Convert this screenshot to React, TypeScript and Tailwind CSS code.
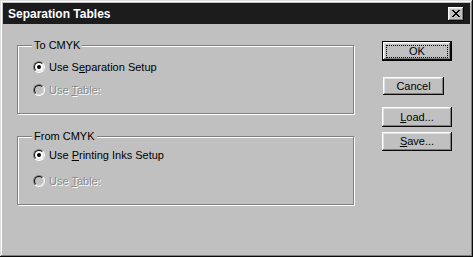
import React from "react";

const font = { fontFamily: '"Liberation Sans", Arial, sans-serif' };

function Radio({ checked, disabled }: { checked?: boolean; disabled?: boolean }) {
  return (
    <span className="relative block w-[12px] h-[12px] shrink-0 rounded-full border border-t-[#808080] border-l-[#808080] border-b-white border-r-white">
      <span
        className={
          "flex items-center justify-center w-full h-full rounded-full border border-t-[#0a0a0a] border-l-[#0a0a0a] border-b-[#dfdfdf] border-r-[#dfdfdf] " +
          (disabled ? "bg-[#c0c0c0]" : "bg-white")
        }
      >
        {checked && <span className="block w-[4px] h-[4px] rounded-full bg-black" />}
      </span>
    </span>
  );
}

function RadioRow({
  checked,
  disabled,
  children,
}: {
  checked?: boolean;
  disabled?: boolean;
  children: React.ReactNode;
}) {
  return (
    <div className="flex items-center h-[14px] gap-[4px]">
      <Radio checked={checked} disabled={disabled} />
      <span
        className={
          "text-[11px] leading-[13px] " +
          (disabled ? "text-[#8a8a8a] [text-shadow:1px_1px_0_#ffffff]" : "text-black")
        }
      >
        {children}
      </span>
    </div>
  );
}

function Group({
  label,
  className,
  children,
}: {
  label: string;
  className?: string;
  children: React.ReactNode;
}) {
  return (
    <div
      className={
        "relative w-[337px] h-[69px] border border-[#808080] shadow-[inset_1px_1px_0_#ffffff,1px_1px_0_#ffffff] pl-[15px] flex flex-col " +
        (className ?? "")
      }
    >
      <span className="absolute top-[-8px] left-[14px] px-[2px] bg-[#c0c0c0] text-[11px] leading-[14px] text-black">
        {label}
      </span>
      {children}
    </div>
  );
}

function Btn({
  children,
  w,
  h,
  className,
}: {
  children: React.ReactNode;
  w: string;
  h: string;
  className?: string;
}) {
  return (
    <div
      className={
        "flex items-center justify-center bg-[#c0c0c0] text-[11px] leading-[13px] text-black shadow-[inset_-1px_-1px_0_#0a0a0a,inset_1px_1px_0_#ffffff,inset_-2px_-2px_0_#808080,inset_2px_2px_0_#dfdfdf] " +
        w +
        " " +
        h +
        " " +
        (className ?? "")
      }
    >
      {children}
    </div>
  );
}

export default function App() {
  return (
    <div
      style={font}
      className="w-[473px] h-[257px] bg-[#c0c0c0] p-[3px] flex flex-col shadow-[inset_-1px_-1px_0_#0a0a0a,inset_1px_1px_0_#dfdfdf,inset_-2px_-2px_0_#808080,inset_2px_2px_0_#ffffff]"
    >
      {/* Title bar */}
      <div className="h-[21px] bg-[#1c1c1c] flex items-center justify-between pl-[5px] pr-[6px]">
        <span className="text-white font-bold text-[12px] leading-[14px]">Separation Tables</span>
        <div className="w-[16px] h-[14px] bg-[#c0c0c0] flex items-center justify-center shadow-[inset_-1px_-1px_0_#0a0a0a,inset_1px_1px_0_#ffffff,inset_-2px_-2px_0_#808080,inset_2px_2px_0_#dfdfdf]">
          <svg width="8" height="7" viewBox="0 0 8 7" shapeRendering="crispEdges">
            <path
              fill="#000"
              d="M0 0h2v1h-2zM6 0h2v1h-2zM1 1h2v1h-2zM5 1h2v1h-2zM2 2h4v1h-4zM3 3h2v1h-2zM2 4h4v1h-4zM1 5h2v1h-2zM5 5h2v1h-2zM0 6h2v1h-2zM6 6h2v1h-2z"
            />
          </svg>
        </div>
      </div>

      {/* Body */}
      <div className="flex flex-1">
        <div className="flex flex-col pl-[14px]">
          <Group label="To CMYK" className="mt-[21px] pt-[14px] gap-[9px]">
            <RadioRow checked>
              Use S<span className="underline underline-offset-1">e</span>paration Setup
            </RadioRow>
            <RadioRow disabled>
              Use <span className="underline underline-offset-1">T</span>able:
            </RadioRow>
          </Group>
          <Group label="From CMYK" className="mt-[22px] pt-[11px] gap-[12px]">
            <RadioRow checked>
              Use <span className="underline underline-offset-1">P</span>rinting Inks Setup
            </RadioRow>
            <RadioRow disabled>
              Use <span className="underline underline-offset-1">T</span>able:
            </RadioRow>
          </Group>
        </div>

        <div className="flex flex-col ml-[28px] pt-[17px]">
          <div className="w-[70px] h-[20px] border border-black">
            <Btn w="w-full" h="h-full">
              <span className="flex items-center justify-center w-[62px] h-[13px] border border-dotted border-black">
                OK
              </span>
            </Btn>
          </div>
          <Btn w="w-[61px]" h="h-[18px]" className="mt-[16px] ml-[1px]">
            Cancel
          </Btn>
          <Btn w="w-[70px]" h="h-[20px]" className="mt-[12px]">
            <span>
              <span className="underline underline-offset-1">L</span>oad...
            </span>
          </Btn>
          <Btn w="w-[70px]" h="h-[19px]" className="mt-[5px]">
            <span>
              <span className="underline underline-offset-1">S</span>ave...
            </span>
          </Btn>
        </div>
      </div>
    </div>
  );
}
